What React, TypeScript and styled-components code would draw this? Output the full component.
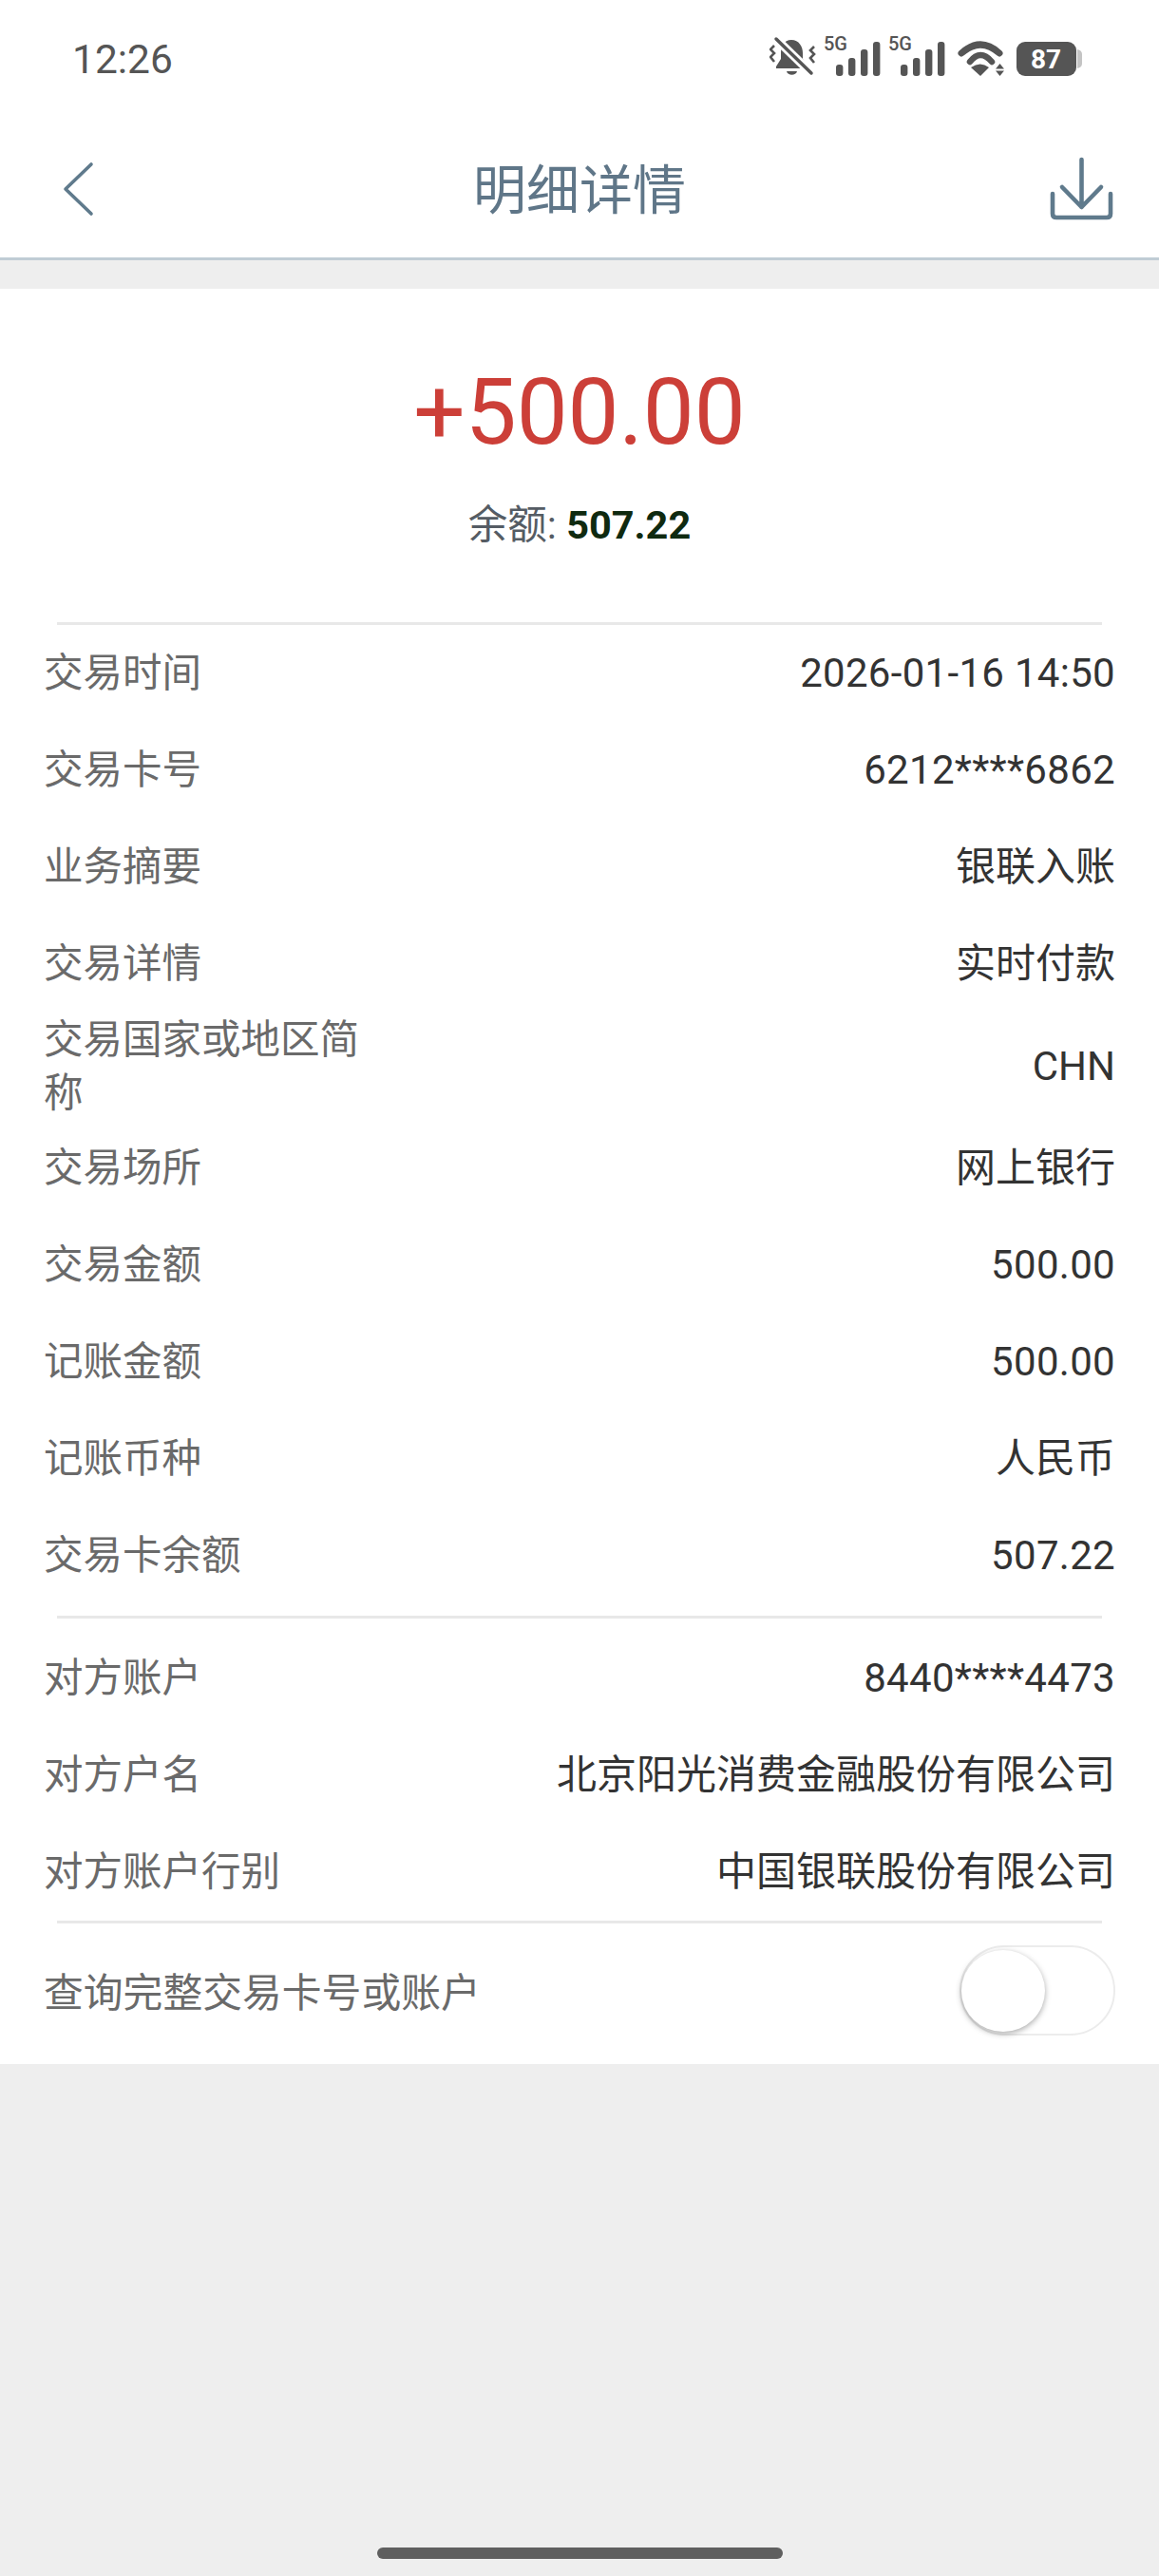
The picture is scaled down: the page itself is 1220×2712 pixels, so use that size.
import React from "react";
import styled, { createGlobalStyle } from "styled-components";

const Global = createGlobalStyle`
  html, body { margin: 0; padding: 0; background: #eeeeee; }
  body { font-family: Roboto, "Noto Sans CJK SC", sans-serif; }
`;

const Page = styled.div`
  width: 1220px;
  height: 2712px;
  display: flex;
  flex-direction: column;
  background: #eeeeee;
  overflow: hidden;
`;

const StatusBar = styled.div`
  height: 126px;
  background: #fff;
  display: flex;
  justify-content: space-between;
  align-items: flex-start;
  padding: 0 80px 0 76px;
  box-sizing: border-box;
`;

const Clock = styled.div`
  font-size: 42.5px;
  line-height: 50px;
  margin-top: 38px;
  color: #555;
`;

const StatusIcons = styled.svg`
  width: 330px;
  height: 60px;
  margin-top: 28px;
  display: block;
`;

const NavBar = styled.div`
  height: 148px;
  background: #fff;
  border-bottom: 3px solid #c0ccd5;
  box-sizing: border-box;
  display: flex;
  align-items: center;
  justify-content: space-between;
  padding: 0 47px 0 64px;
  position: relative;
`;

const NavTitle = styled.div`
  position: absolute;
  left: 0;
  right: 0;
  text-align: center;
  font-size: 56px;
  line-height: 70px;
  top: 40px;
  color: #5f7688;
`;

const NavIcon = styled.svg`
  display: block;
`;

const Gap = styled.div`
  height: 30px;
  background: #eeeeee;
`;

const Card = styled.div`
  background: #fff;
  display: flex;
  flex-direction: column;
`;

const Summary = styled.div`
  height: 351px;
  display: flex;
  flex-direction: column;
  align-items: center;
`;

const Amount = styled.div`
  margin-top: 68px;
  font-size: 96px;
  line-height: 124px;
  color: #cc3f38;
`;

const Balance = styled.div`
  margin-top: 29px;
  font-size: 41.5px;
  line-height: 56px;
  color: #555c64;
  b {
    font-weight: 700;
    color: #0f2a10;
  }
`;

const Divider = styled.div<{ $before?: number; $after?: number }>`
  height: 3px;
  margin: ${(p) => `${p.$before ?? 0}px 60px ${p.$after ?? 0}px`};
  background: #e8e8e8;
`;

const Row = styled.div<{ $height?: number }>`
  min-height: ${(p) => p.$height ?? 102}px;
  padding: 0 46px;
  display: flex;
  align-items: center;
  justify-content: space-between;
  box-sizing: border-box;
  font-size: 41.5px;
  line-height: 56px;
`;

const Label = styled.div`
  max-width: 345px;
  color: #6a6a6a;
`;

const ToggleLabel = styled(Label)`
  max-width: none;
  font-size: 41.8px;
`;

const Value = styled.div<{ $digits?: boolean }>`
  color: #333;
  text-align: right;
  font-size: 42px;
  letter-spacing: ${(p) => (p.$digits ? "0.3px" : "0")};
`;

const Toggle = styled.div`
  width: 164px;
  height: 95px;
  margin-top: -8px;
  border-radius: 48px;
  border: 2px solid #ececec;
  box-sizing: border-box;
  position: relative;
  background: #fff;
`;

const Knob = styled.div`
  position: absolute;
  left: 0;
  top: 3px;
  width: 88px;
  height: 86px;
  border-radius: 50%;
  background: #fff;
  box-shadow: 0 2px 6px rgba(0, 0, 0, 0.34);
`;

const Rest = styled.div`
  flex: 1;
  display: flex;
  align-items: flex-end;
  justify-content: center;
  background: #eeeeee;
`;

const HomeBar = styled.div`
  width: 427px;
  height: 12px;
  border-radius: 6px;
  background: #5f5f5f;
  margin-bottom: 18px;
`;

const first: [string, string][] = [
  ["交易时间", "2026-01-16 14:50"],
  ["交易卡号", "6212****6862"],
  ["业务摘要", "银联入账"],
  ["交易详情", "实时付款"],
  ["交易国家或地区简称", "CHN"],
  ["交易场所", "网上银行"],
  ["交易金额", "500.00"],
  ["记账金额", "500.00"],
  ["记账币种", "人民币"],
  ["交易卡余额", "507.22"],
];

const second: [string, string][] = [
  ["对方账户", "8440****4473"],
  ["对方户名", "北京阳光消费金融股份有限公司"],
  ["对方账户行别", "中国银联股份有限公司"],
];

const INK = "#555";

const Signal = ({ x, labelX }: { x: number; labelX: number }) => (
  <g fill={INK}>
    <text x={labelX} y="53" fontSize="20" fontWeight="500" fontFamily="Roboto">
      5G
    </text>
    <rect x={x} y="68" width="7.4" height="12" rx="3" />
    <rect x={x + 13} y="61" width="7.4" height="19" rx="3" />
    <rect x={x + 26} y="52" width="7.4" height="28" rx="3" />
    <rect x={x + 39} y="44" width="7.4" height="36" rx="3" />
  </g>
);

const isDigits = (v: string) => /^[0-9]/.test(v);

export default function App() {
  return (
    <Page>
      <Global />
      <StatusBar>
        <Clock>12:26</Clock>
        <StatusIcons viewBox="810 28 330 60">
          {/* muted-vibrate bell */}
          <path
            fill={INK}
            d="M833 42C825 42 822 49 822 56V62L817 70V72H850V70L845 62V56C845 49 841 42 833 42Z"
          />
          <path fill={INK} d="M828 75H839C838 80 829 80 828 75Z" />
          <path d="M817 41L854 77" stroke="#fff" strokeWidth="9" fill="none" />
          <path d="M817 41L854 77" stroke={INK} strokeWidth="3.5" strokeLinecap="round" fill="none" />
          <path d="M815 48L811 52L815 56L811 60L815 65" stroke={INK} strokeWidth="2.6" fill="none" />
          <path d="M857 49L853 53L857 57L853 61L857 66" stroke={INK} strokeWidth="2.6" fill="none" />

          <Signal x={880} labelX={867} />
          <Signal x={948} labelX={935} />

          {/* wifi with activity arrows */}
          <path d="M1012 56Q1032 38 1052 56" stroke={INK} strokeWidth="7" strokeLinecap="round" fill="none" />
          <path d="M1021 65Q1032 51 1044 65" stroke={INK} strokeWidth="6.5" strokeLinecap="round" fill="none" />
          <path fill={INK} d="M1022 71Q1032 64 1041 71L1032 80Z" />
          <path fill={INK} d="M1052.5 67L1048 72.5H1057Z" />
          <path fill={INK} d="M1048 74.5H1057L1052.5 80Z" />

          {/* battery */}
          <rect x="1070" y="44" width="63" height="36" rx="9" fill={INK} />
          <path fill="#c4c4c4" d="M1134 52Q1139 53 1139 57V67Q1139 71 1134 72Z" />
          <text
            x="1101"
            y="72"
            fontSize="28"
            fontWeight="700"
            fontFamily="Roboto"
            fill="#fff"
            textAnchor="middle"
          >
            87
          </text>
        </StatusIcons>
      </StatusBar>
      <NavBar>
        <NavIcon width="36" height="58" viewBox="0 0 36 58" fill="none">
          <path
            d="M32 3L5 29L32 55"
            stroke="#5f7a8c"
            strokeWidth="3.6"
            strokeLinecap="round"
            strokeLinejoin="round"
          />
        </NavIcon>
        <NavTitle>明细详情</NavTitle>
        <NavIcon width="68" height="68" viewBox="0 0 68 68" fill="none">
          <path
            d="M33.5 3V53M13 32L33.5 53L54 32M3 39V60Q3 64 7 64H60Q64 64 64 60V39"
            stroke="#5f7a8c"
            strokeWidth="4.6"
            strokeLinecap="round"
            strokeLinejoin="round"
          />
        </NavIcon>
      </NavBar>
      <Gap />
      <Card>
        <Summary>
          <Amount>+500.00</Amount>
          <Balance>
            余额: <b>507.22</b>
          </Balance>
        </Summary>
        <Divider />
        {first.map(([k, v]) => (
          <Row key={k} $height={k.length > 6 ? 113 : 102}>
            <Label>{k}</Label>
            <Value $digits={isDigits(v)}>{v}</Value>
          </Row>
        ))}
        <Divider $before={12} $after={12} />
        {second.map(([k, v]) => (
          <Row key={k}>
            <Label>{k}</Label>
            <Value $digits={isDigits(v)}>{v}</Value>
          </Row>
        ))}
        <Divider />
        <Row $height={148}>
          <ToggleLabel>查询完整交易卡号或账户</ToggleLabel>
          <Toggle>
            <Knob />
          </Toggle>
        </Row>
      </Card>
      <Rest>
        <HomeBar />
      </Rest>
    </Page>
  );
}
